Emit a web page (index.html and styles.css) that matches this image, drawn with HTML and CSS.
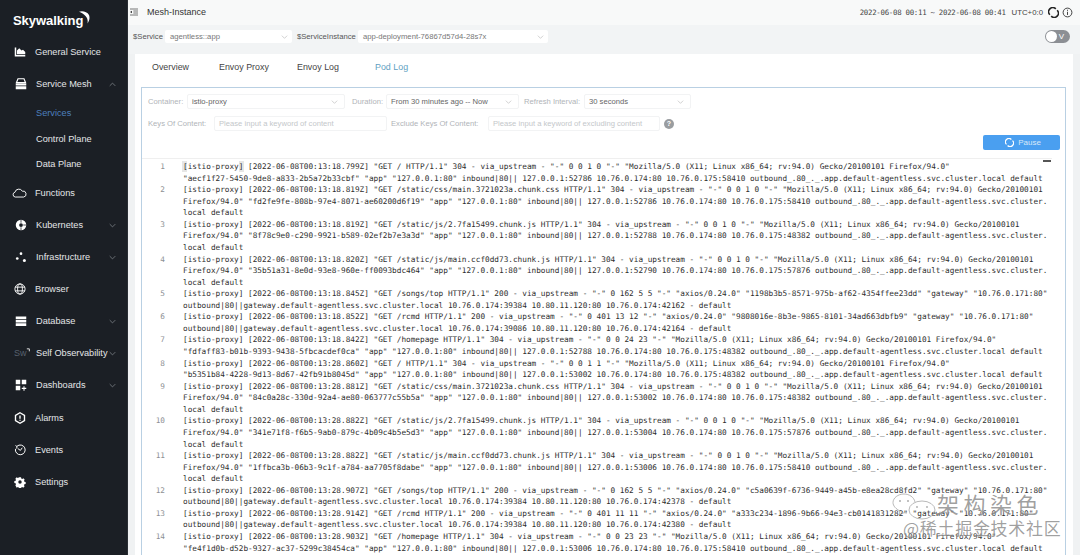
FILE: index.html
```html
<!DOCTYPE html>
<html lang="en">
<head>
<meta charset="utf-8">
<title>Mesh-Instance</title>
<link rel="stylesheet" href="styles.css">
</head>
<body>
<div class="app">
<aside class="side">
  <div class="logo">Skywalking<svg class="moon" viewBox="0 0 11 13"><path d="M0 .8C3-.4 8 .4 10 4c1 2.500.5 5.500-1.500 8.500C9 9.500 8.500 7 6.500 5 5 3.300 2.500 1.800 0 .8z" fill="#fff"/></svg></div>
  <nav class="menu">
    <a class="item"><svg class="ic" viewBox="0 0 16 16"><path d="M1 2h2v10h12v2H1z" fill="#fff"/><path d="M4 11V6l3-3 3 3 2-1 3 3v3z" fill="#fff"/></svg><span class="lb">General Service</span></a>
    <a class="item sub"><svg class="ic" viewBox="0 0 16 16"><path d="M4 1h8l2 5H2z" fill="none" stroke="#fff" stroke-width="1.500"/><path d="M1 7h14v3H1zM1 11h14v4H1z" fill="#fff"/></svg><span class="lb">Service Mesh</span><svg class="chev" viewBox="0 0 10 6"><path d="M1 5l4-4 4 4" /></svg></a>
    <a class="child active">Services</a>
    <a class="child">Control Plane</a>
    <a class="child">Data Plane</a>
    <a class="item"><svg class="ic wide" viewBox="0 0 16 10"><path d="M3.500 9.300a2.600 2.600 0 0 1-.4-5.100A4.300 4.300 0 0 1 11 3a3.200 3.200 0 0 1 1.500 6.300z" fill="none" stroke="#fff" stroke-width="1"/></svg><span class="lb">Functions</span></a>
    <a class="item sub"><svg class="ic" viewBox="0 0 16 16"><circle cx="8" cy="8" r="7" fill="#fff"/><path d="M8 1v4M8 11v4M11 8h4" stroke="#1b1f25" stroke-width="1"/><circle cx="8" cy="8" r="2.500" fill="#1b1f25"/></svg><span class="lb">Kubernetes</span><svg class="chev" viewBox="0 0 10 6"><path d="M1 1l4 4 4-4" /></svg></a>
    <a class="item sub"><svg class="ic" viewBox="0 0 16 16"><circle cx="8" cy="3.500" r="1.800" fill="#fff"/><circle cx="3" cy="10" r="1.800" fill="#fff"/><circle cx="12.500" cy="12.500" r="2" fill="#fff"/></svg><span class="lb">Infrastructure</span><svg class="chev" viewBox="0 0 10 6"><path d="M1 1l4 4 4-4" /></svg></a>
    <a class="item"><svg class="ic" viewBox="0 0 16 16"><g fill="none" stroke="#fff" stroke-width="1.200"><circle cx="8" cy="8" r="6.800"/><ellipse cx="8" cy="8" rx="3.200" ry="6.800"/><path d="M1.500 5.500h13M1.500 10.500h13"/></g></svg><span class="lb">Browser</span></a>
    <a class="item sub"><svg class="ic" viewBox="0 0 16 16"><path d="M1 2h14v3.500H1zM1 6.500h14V10H1zM1 11h14v3.500H1z" fill="#fff"/></svg><span class="lb">Database</span><svg class="chev" viewBox="0 0 10 6"><path d="M1 1l4 4 4-4" /></svg></a>
    <a class="item sub"><span class="sw">Sw<svg class="swarc" viewBox="0 0 6 6"><path d="M1 1h3v3" fill="none" stroke="#fff"/></svg></span><span class="lb">Self Observability</span><svg class="chev tight" viewBox="0 0 10 6"><path d="M1 1l4 4 4-4" /></svg></a>
    <a class="item sub"><svg class="ic" viewBox="0 0 16 16"><path d="M1 1h6v6H1zM9 1h6v6H9zM1 9h6v6H1z" fill="#fff"/><path d="M12 9.500v6M9 12.500h6" stroke="#fff" stroke-width="1.400"/></svg><span class="lb">Dashboards</span><svg class="chev" viewBox="0 0 10 6"><path d="M1 1l4 4 4-4" /></svg></a>
    <a class="item"><svg class="ic" viewBox="0 0 16 16"><path d="M8 1l6 3.500v7L8 15l-6-3.500v-7z" fill="none" stroke="#fff" stroke-width="1.800"/><path d="M8 4.500v4.500M8 10.300v1.500" stroke="#fff" stroke-width="1.800"/></svg><span class="lb">Alarms</span></a>
    <a class="item"><svg class="ic" viewBox="0 0 16 16"><g fill="none" stroke="#fff" stroke-width="1.300"><path d="M4 3a6.500 6.500 0 1 1-2 3.500"/><path d="M2 2l2 1.500-.5 2.500"/><path d="M5 6l3.500 2.500L11 5"/></g></svg><span class="lb">Events</span></a>
    <a class="item"><svg class="ic" viewBox="0 0 16 16"><path d="M6.500 1h3l.4 2 1.500.7 1.800-1 2 2.200-1.100 1.700.6 1.500 2 .4v3l-2 .4-.6 1.500 1 1.700-2.100 2.100-1.700-1-1.500.6-.4 1.900h-3l-.4-1.900-1.500-.6-1.700 1L.7 13.600l1-1.700-.6-1.500L-.9 10V7l2-.4.6-1.500-1-1.700 2.100-2.200 1.700 1 1.500-.7z" transform="translate(1.200 .8) scale(.86)" fill="#fff"/><circle cx="8" cy="8" r="2.300" fill="#1b1f25"/></svg><span class="lb">Settings</span></a>
  </nav>
</aside>
<main class="main">
  <header class="top">
    <svg class="fold" viewBox="0 0 12 10"><path d="M0 .5h12M5 3.500h7M5 6.500h7M0 9.500h12" stroke="#333" fill="none"/><path d="M3 3L0 5l3 2z" fill="#333"/></svg>
    <span class="crumb">Mesh-Instance</span>
    <span class="time">2022-06-08 00:11 ~ 2022-06-08 00:41</span>
    <span class="utc">UTC+0:0</span>
    <svg class="topic" viewBox="0 0 12 12"><path d="M2 8.500A4.500 4.500 0 0 1 8.500 2M10 3.500A4.500 4.500 0 0 1 3.500 10" fill="none" stroke="#222" stroke-width="1.800"/></svg>
    <svg class="topic" viewBox="0 0 12 12"><circle cx="6" cy="6" r="4.800" fill="none" stroke="#333"/><path d="M6 5.200v3.500M6 3v1.200" stroke="#333"/></svg>
  </header>
  <section class="vars">
    <label class="vlabel">$Service</label>
    <div class="sel svc"><span>agentless::app</span><svg class="down" viewBox="0 0 10 6"><path d="M1 1l4 4 4-4"/></svg></div>
    <label class="vlabel lab2">$ServiceInstance</label>
    <div class="sel inst"><span>app-deployment-76867d57d4-28s7x</span><svg class="down" viewBox="0 0 10 6"><path d="M1 1l4 4 4-4"/></svg></div>
    <div class="toggle"><i class="knob"></i><span>V</span></div>
  </section>
  <section class="panel">
    <nav class="tabs">
      <a class="tab t1">Overview</a><a class="tab t2">Envoy Proxy</a><a class="tab t3">Envoy Log</a><a class="tab t4 on">Pod Log</a>
    </nav>
    <div class="box">
      <div class="filters">
        <div class="frow">
          <span class="fl f-a">Container:</span>
          <div class="fsel w1"><span>istio-proxy</span><svg class="down" viewBox="0 0 10 6"><path d="M1 1l4 4 4-4"/></svg></div>
          <span class="fl f-b">Duration:</span>
          <div class="fsel w2"><span>From 30 minutes ago -- Now</span><svg class="down" viewBox="0 0 10 6"><path d="M1 1l4 4 4-4"/></svg></div>
          <span class="fl f-c">Refresh Interval:</span>
          <div class="fsel w3"><span>30 seconds</span><svg class="down" viewBox="0 0 10 6"><path d="M1 1l4 4 4-4"/></svg></div>
        </div>
        <div class="frow r2">
          <span class="fl f-d">Keys Of Content:</span>
          <div class="fin w4">Please input a keyword of content</div>
          <span class="fl f-e">Exclude Keys Of Content:</span>
          <div class="fin w5">Please input a keyword of excluding content</div>
          <span class="help">?</span>
        </div>
        <div class="actions"><button class="pause"><svg class="spin" viewBox="0 0 12 12"><path d="M2 8.500A4.500 4.500 0 0 1 8.500 2M10 3.500A4.500 4.500 0 0 1 3.500 10" fill="none" stroke="#fff" stroke-width="1.600"/></svg>Pause</button></div>
      </div>
      <div class="editor">
        <div class="ln"><span class="no">1</span><pre class="tx"><i class="cur c1"></i><i class="cur c2"></i>[istio-proxy] [2022-06-08T00:13:18.799Z] "GET / HTTP/1.1" 304 - via_upstream - "-" 0 0 1 0 "-" "Mozilla/5.0 (X11; Linux x86_64; rv:94.0) Gecko/20100101 Firefox/94.0"
"aecf1f27-5450-9de8-a833-2b5a72b33cbf" "app" "127.0.0.1:80" inbound|80|| 127.0.0.1:52786 10.76.0.174:80 10.76.0.175:58410 outbound_.80_._.app.default-agentless.svc.cluster.local default</pre></div>
        <div class="ln"><span class="no">2</span><pre class="tx">[istio-proxy] [2022-06-08T00:13:18.819Z] "GET /static/css/main.3721023a.chunk.css HTTP/1.1" 304 - via_upstream - "-" 0 0 1 0 "-" "Mozilla/5.0 (X11; Linux x86_64; rv:94.0) Gecko/20100101
Firefox/94.0" "fd2fe9fe-808b-97e4-8071-ae60200d6f19" "app" "127.0.0.1:80" inbound|80|| 127.0.0.1:52786 10.76.0.174:80 10.76.0.175:58410 outbound_.80_._.app.default-agentless.svc.cluster.
local default</pre></div>
        <div class="ln"><span class="no">3</span><pre class="tx">[istio-proxy] [2022-06-08T00:13:18.819Z] "GET /static/js/2.7fa15499.chunk.js HTTP/1.1" 304 - via_upstream - "-" 0 0 1 0 "-" "Mozilla/5.0 (X11; Linux x86_64; rv:94.0) Gecko/20100101
Firefox/94.0" "8f78c9e0-c290-9921-b589-02ef2b7e3a3d" "app" "127.0.0.1:80" inbound|80|| 127.0.0.1:52788 10.76.0.174:80 10.76.0.175:48382 outbound_.80_._.app.default-agentless.svc.cluster.
local default</pre></div>
        <div class="ln"><span class="no">4</span><pre class="tx">[istio-proxy] [2022-06-08T00:13:18.820Z] "GET /static/js/main.ccf0dd73.chunk.js HTTP/1.1" 304 - via_upstream - "-" 0 0 1 0 "-" "Mozilla/5.0 (X11; Linux x86_64; rv:94.0) Gecko/20100101
Firefox/94.0" "35b51a31-8e0d-93e8-960e-ff0093bdc464" "app" "127.0.0.1:80" inbound|80|| 127.0.0.1:52790 10.76.0.174:80 10.76.0.175:57876 outbound_.80_._.app.default-agentless.svc.cluster.
local default</pre></div>
        <div class="ln"><span class="no">5</span><pre class="tx">[istio-proxy] [2022-06-08T00:13:18.845Z] "GET /songs/top HTTP/1.1" 200 - via_upstream - "-" 0 162 5 5 "-" "axios/0.24.0" "1198b3b5-8571-975b-af62-4354ffee23dd" "gateway" "10.76.0.171:80"
outbound|80||gateway.default-agentless.svc.cluster.local 10.76.0.174:39384 10.80.11.120:80 10.76.0.174:42162 - default</pre></div>
        <div class="ln"><span class="no">6</span><pre class="tx">[istio-proxy] [2022-06-08T00:13:18.852Z] "GET /rcmd HTTP/1.1" 200 - via_upstream - "-" 0 401 13 12 "-" "axios/0.24.0" "9808016e-8b3e-9865-8101-34ad663dbfb9" "gateway" "10.76.0.171:80"
outbound|80||gateway.default-agentless.svc.cluster.local 10.76.0.174:39086 10.80.11.120:80 10.76.0.174:42164 - default</pre></div>
        <div class="ln"><span class="no">7</span><pre class="tx">[istio-proxy] [2022-06-08T00:13:18.842Z] "GET /homepage HTTP/1.1" 304 - via_upstream - "-" 0 0 24 23 "-" "Mozilla/5.0 (X11; Linux x86_64; rv:94.0) Gecko/20100101 Firefox/94.0"
"fdfaff83-b01b-9393-9438-5fbcacdef0ca" "app" "127.0.0.1:80" inbound|80|| 127.0.0.1:52788 10.76.0.174:80 10.76.0.175:48382 outbound_.80_._.app.default-agentless.svc.cluster.local default</pre></div>
        <div class="ln"><span class="no">8</span><pre class="tx">[istio-proxy] [2022-06-08T00:13:28.860Z] "GET / HTTP/1.1" 304 - via_upstream - "-" 0 0 1 1 "-" "Mozilla/5.0 (X11; Linux x86_64; rv:94.0) Gecko/20100101 Firefox/94.0"
"b5351b84-4228-9d13-8d67-42fb91b8045d" "app" "127.0.0.1:80" inbound|80|| 127.0.0.1:53002 10.76.0.174:80 10.76.0.175:48382 outbound_.80_._.app.default-agentless.svc.cluster.local default</pre></div>
        <div class="ln"><span class="no">9</span><pre class="tx">[istio-proxy] [2022-06-08T00:13:28.881Z] "GET /static/css/main.3721023a.chunk.css HTTP/1.1" 304 - via_upstream - "-" 0 0 1 0 "-" "Mozilla/5.0 (X11; Linux x86_64; rv:94.0) Gecko/20100101
Firefox/94.0" "84c0a28c-330d-92a4-ae80-063777c55b5a" "app" "127.0.0.1:80" inbound|80|| 127.0.0.1:53002 10.76.0.174:80 10.76.0.175:48382 outbound_.80_._.app.default-agentless.svc.cluster.
local default</pre></div>
        <div class="ln"><span class="no">10</span><pre class="tx">[istio-proxy] [2022-06-08T00:13:28.882Z] "GET /static/js/2.7fa15499.chunk.js HTTP/1.1" 304 - via_upstream - "-" 0 0 1 0 "-" "Mozilla/5.0 (X11; Linux x86_64; rv:94.0) Gecko/20100101
Firefox/94.0" "341e71f8-f6b5-9ab0-879c-4b09c4b5e5d3" "app" "127.0.0.1:80" inbound|80|| 127.0.0.1:53004 10.76.0.174:80 10.76.0.175:57876 outbound_.80_._.app.default-agentless.svc.cluster.
local default</pre></div>
        <div class="ln"><span class="no">11</span><pre class="tx">[istio-proxy] [2022-06-08T00:13:28.882Z] "GET /static/js/main.ccf0dd73.chunk.js HTTP/1.1" 304 - via_upstream - "-" 0 0 1 0 "-" "Mozilla/5.0 (X11; Linux x86_64; rv:94.0) Gecko/20100101
Firefox/94.0" "1ffbca3b-06b3-9c1f-a784-aa7705f8dabe" "app" "127.0.0.1:80" inbound|80|| 127.0.0.1:53006 10.76.0.174:80 10.76.0.175:58410 outbound_.80_._.app.default-agentless.svc.cluster.
local default</pre></div>
        <div class="ln"><span class="no">12</span><pre class="tx">[istio-proxy] [2022-06-08T00:13:28.907Z] "GET /songs/top HTTP/1.1" 200 - via_upstream - "-" 0 162 5 5 "-" "axios/0.24.0" "c5a0639f-6736-9449-a45b-e8ea28cd8fd2" "gateway" "10.76.0.171:80"
outbound|80||gateway.default-agentless.svc.cluster.local 10.76.0.174:39384 10.80.11.120:80 10.76.0.174:42378 - default</pre></div>
        <div class="ln"><span class="no">13</span><pre class="tx">[istio-proxy] [2022-06-08T00:13:28.914Z] "GET /rcmd HTTP/1.1" 200 - via_upstream - "-" 0 401 11 11 "-" "axios/0.24.0" "a333c234-1896-9b66-94e3-cb0141831282" "gateway" "10.76.0.171:80"
outbound|80||gateway.default-agentless.svc.cluster.local 10.76.0.174:39384 10.80.11.120:80 10.76.0.174:42380 - default</pre></div>
        <div class="ln"><span class="no">14</span><pre class="tx">[istio-proxy] [2022-06-08T00:13:28.903Z] "GET /homepage HTTP/1.1" 304 - via_upstream - "-" 0 0 23 23 "-" "Mozilla/5.0 (X11; Linux x86_64; rv:94.0) Gecko/20100101 Firefox/94.0"
"fe4f1d0b-d52b-9327-ac37-5299c38454ca" "app" "127.0.0.1:80" inbound|80|| 127.0.0.1:53006 10.76.0.174:80 10.76.0.175:58410 outbound_.80_._.app.default-agentless.svc.cluster.local default</pre></div>
        <div class="mark"></div>
      </div>
    </div>
  </section>
</main>
</div>
<div class="wm">
  <svg class="wechat" viewBox="0 0 46 28"><g fill="none" stroke="#8a8a8a" stroke-width=".8" opacity=".75"><path d="M17 20c-1 0-2 0-3-.300L9 22l1-4C6 16 3 13 3 9.500 3 5 8 1 14 1c5 0 10 3 11 8"/><ellipse cx="32" cy="17" rx="13" ry="9"/></g><g fill="#8a8a8a" opacity=".7"><circle cx="10" cy="8" r="1"/><circle cx="18" cy="8" r="1"/><circle cx="27" cy="14" r=".9"/><circle cx="37" cy="14" r=".9"/></g></svg>
  <div class="wm1">架构染色</div>
  <div class="wm2">@稀土掘金技术社区</div>
</div>
</body>
</html>
```
FILE: styles.css
```css
* { box-sizing: border-box; }
html, body { margin: 0; height: 100%; overflow: hidden; }
body { font-family: "Liberation Sans", Arial, sans-serif; color: #333; background: #f7f8f8; }
.app { display: flex; height: 555px; width: 1080px; }
.side { width: 128px; flex: none; background: #1b1f25; color: #e8eaec; border-right: 1px solid #2a2e34; }
.logo { font-size: 13px; font-weight: bold; color: #fff; height: 36px; padding: 13px 0 0 13px; letter-spacing: -.05px; display: flex; }
.moon { width: 11px; height: 13px; margin: -2px 0 0 -4px; flex: none; }
.menu { display: flex; flex-direction: column; }
.item { height: 32.050px; display: flex; align-items: center; font-size: 9.200px; padding-left: 14px; color: #e4e6e8; position: relative; }
.ic { width: 12px; height: 12px; flex: none; margin-right: 9px; }
.ic.wide { width: 15px; margin-left: -2px; margin-right: 8px; }
.item.sub .ic { margin-left: 1px; margin-right: 9px; }
.lb { white-space: nowrap; }
.chev { width: 7px; height: 5px; margin-left: auto; margin-right: 11px; fill: none; stroke: #8b9096; stroke-width: 1; flex: none; }
.chev.tight { margin-right: 11px; }
.child { height: 25.700px; display: flex; align-items: center; padding-left: 36px; font-size: 9.200px; color: #e4e6e8; }
.child.active { color: #4d7fbd; }
.sw { width: 14px; font-size: 9px; color: #57606e; margin-right: 8px; white-space: nowrap; position: relative; }
.swarc { position: absolute; left: 12px; top: 0; width: 5px; height: 5px; }
.main { flex: 1; min-width: 0; display: flex; flex-direction: column; background: #f0f2f3; }
.top { height: 25px; flex: none; background: #f8f9f9; display: flex; align-items: center; padding: 0 7px 1px 0; }
.fold { width: 8px; height: 8px; margin-left: 2px; margin-right: 9px; }
.crumb { font-size: 9px; color: #333; }
.time { margin-left: auto; font-family: "DejaVu Sans Mono", monospace; font-size: 7.400px; letter-spacing: -.28px; color: #444; }
.utc { font-size: 7.800px; margin-left: 6px; margin-right: 2px; color: #444; }
.topic { width: 11px; height: 11px; margin-left: 3px; }
.vars { height: 29px; flex: none; display: flex; align-items: center; padding: 0 10px 6px 5px; background: #f2f4f5; font-size: 7.700px; }
.vlabel { color: #555; white-space: nowrap; margin-right: 2px; }
.lab2 { margin-left: 5px; }
.sel { background: #fff; height: 13px; display: flex; align-items: center; justify-content: space-between; padding: 0 4px 0 5px; color: #777; border-radius: 2px; }
.svc { width: 127px; }
.inst { width: 190px; }
.down { width: 7px; height: 4px; fill: none; stroke: #bbb; stroke-width: 1; flex: none; }
.toggle { margin-left: auto; width: 25px; height: 13px; border-radius: 7px; background: #8c8f94; position: relative; color: #fff; font-size: 8px; text-align: right; padding-right: 6px; line-height: 13px; }
.knob { position: absolute; left: 1px; top: 1px; width: 11px; height: 11px; border-radius: 50%; background: #fff; }
.panel { flex: 1; min-height: 0; background: #fff; margin: 0 7px 0 7px; display: flex; flex-direction: column; overflow: hidden; }
.tabs { height: 33px; flex: none; display: flex; align-items: center; padding: 0 0 8px 17px; font-size: 8.900px; color: #444; }
.tab { white-space: nowrap; }
.t1 { width: 67px; }
.t2 { width: 78px; }
.t3 { width: 78px; }
.t4 { width: 50px; }
.on { color: #5f9fc2; }
.box { flex: 1; min-height: 0; margin: 0 7px 0 6px; border: 1px solid #b9d0e3; border-bottom: 0; display: flex; flex-direction: column; }
.filters { height: 70px; flex: none; padding: 6px 5px 0 6px; font-size: 7.650px; position: relative; }
.frow { display: flex; align-items: center; height: 15px; }
.r2 { margin-top: 7px; }
.fl { color: #b0b4b8; white-space: nowrap; }
.f-a { width: 39px; }
.f-b { width: 34px; margin-left: 7px; }
.f-c { width: 60px; margin-left: 5px; }
.f-d { width: 66px; }
.f-e { width: 97px; margin-left: 4px; }
.fsel { height: 15px; border: 1px solid #f2f3f4; border-radius: 2px; display: flex; align-items: center; justify-content: space-between; padding: 0 6px 0 4px; color: #666; }
.w1 { width: 158px; }
.w2 { width: 133px; }
.w3 { width: 107px; }
.fin { height: 15px; border: 1px solid #f2f3f4; border-radius: 2px; padding-left: 4px; color: #c4c7ca; line-height: 13px; white-space: nowrap; }
.w4 { width: 173px; }
.w5 { width: 172px; overflow: hidden; }
.help { width: 10px; height: 10px; border-radius: 50%; background: #9a9da0; color: #fff; font-size: 7px; line-height: 10px; text-align: center; margin-left: 4px; font-weight: bold; }
.actions { display: flex; justify-content: flex-end; margin-top: 4px; }
.pause { width: 77px; height: 15px; border: 0; border-radius: 2px; background: #4a9ff0; color: #d8e8f8; font: 8px "Liberation Sans", sans-serif; display: flex; align-items: center; justify-content: center; padding: 0 0 0 3px; }
.spin { width: 9px; height: 9px; margin-right: 4px; }
.editor { flex: 1; min-height: 0; overflow: hidden; margin: 0 13px 0 0; padding-top: 2px; position: relative; border-top: 1px solid #efefef; font-family: "DejaVu Sans Mono", monospace; font-size: 7.720px; line-height: 11.570px; color: #2e2e2e; }
.ln { display: flex; }
.no { width: 41px; flex: none; color: #8d9094; text-align: right; padding-right: 18px; }
.tx { margin: 0; font: inherit; white-space: pre; position: relative; }
.cur { position: absolute; top: 0; height: 11px; width: 5px; background: #e6e6e6; z-index: -1; }
.c1 { left: -1px; }
.c2 { left: 55.500px; }
.ln:first-child { isolation: isolate; }
.mark { position: absolute; right: 1px; top: 1px; width: 8px; height: 2px; background: #555; }
.wm { position: absolute; left: 890px; top: 490px; width: 175px; height: 48px; color: rgba(95,95,95,.6); font-family: "Noto Sans CJK SC", sans-serif; line-height: 1; text-shadow: 0 0 2px rgba(255,255,255,.8); }
.wechat { position: absolute; left: 0; top: 3px; width: 46px; height: 28px; }
.wm1 { position: absolute; left: 47px; top: 2px; font-size: 22px; letter-spacing: 4.500px; white-space: nowrap; }
.wm2 { position: absolute; left: 13px; top: 29px; font-size: 17px; letter-spacing: .7px; white-space: nowrap; }
```
